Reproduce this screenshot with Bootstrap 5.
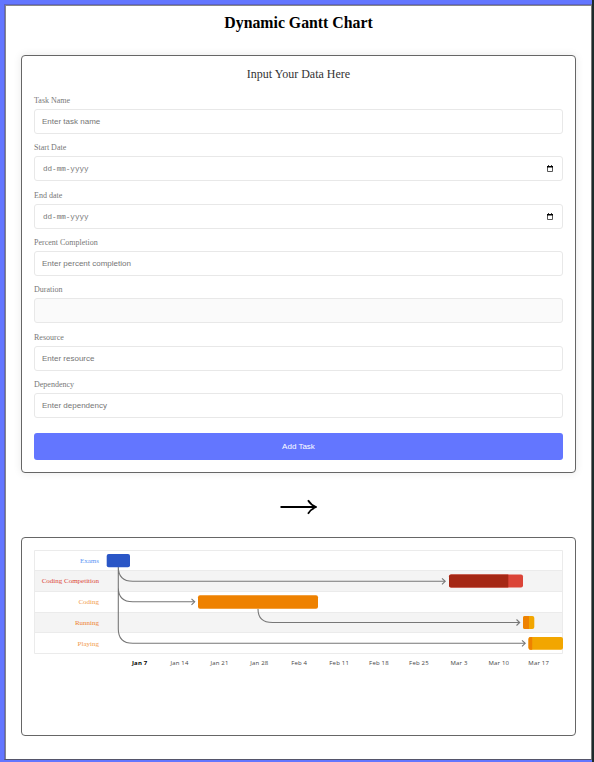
<!DOCTYPE html>
<html lang="en">
<head>
<meta charset="utf-8">
<meta name="viewport" content="width=device-width, initial-scale=1">
<title>Dynamic Gantt Chart</title>
<link href="https://cdn.jsdelivr.net/npm/bootstrap@5.3.0/dist/css/bootstrap.min.css" rel="stylesheet">
<style>
html,body{height:762px;overflow:hidden}
body{font-family:"Liberation Serif",serif;background:#6376ff;color:#000;padding:4px 0 2px 4px;border-right:2px solid #1d2b2b;line-height:1}
.page-frame{height:756px;border:1px solid #5c62c4;border-right-color:#777;border-bottom-color:#55556a;background:#fff;box-shadow:inset 1px 1px 0 #888;padding:0 15px 0 16px}
.page-title{font-size:15.8px;font-weight:700;line-height:18px;padding-top:9px;height:50px}
.panel{border:1px solid #666;border-radius:4px;background:#fff}
.form-panel{height:418px;padding:0 12px;box-shadow:0 0 8px rgba(0,0,0,.09)}
.form-title{font-size:12px;color:#333;line-height:14px;padding-top:11px;height:39.8px}
.field{height:47.38px}
.field label{display:block;font-size:8px;color:#777;line-height:10px;margin-bottom:3px}
.field .form-control{font-family:"Liberation Sans",sans-serif;font-size:8px;height:25px;min-height:0;padding:0 7px;border:1px solid #e8e8e8;border-radius:3px;line-height:12px;color:#757575}
.field .form-control::placeholder{color:#757575;opacity:1}
.field .form-control:disabled{background:#fafafa}
.field .date-text{font-family:"Liberation Mono",monospace;font-size:7.6px;padding:1px 6px 0 8px}
.btn-add{font-family:"Liberation Sans",sans-serif;font-size:8px;height:27px;padding:0;border:0;border-radius:3px;background:#6376ff!important;color:#fff!important;margin-top:5.6px}
.arrow-row{height:64px;padding-top:3px}
.chart-panel{height:199px;padding:12px 12px 0}
.chart-panel svg{display:block;overflow:visible}
.row-name{font-size:7px;text-anchor:end}
.tick{font:6px "Open Sans",sans-serif;letter-spacing:.2px;text-anchor:middle;fill:#444}
</style>
</head>
<body>
<main class="page-frame">
<h1 class="page-title text-center m-0">Dynamic Gantt Chart</h1>
<form class="panel form-panel">
<h2 class="form-title text-center fw-normal m-0">Input Your Data Here</h2>
<div class="field pt-0"><label for="task">Task Name</label><input id="task" class="form-control" placeholder="Enter task name"></div>
<div class="field"><label>Start Date</label><div class="form-control date-text d-flex align-items-center justify-content-between"><span>dd-mm-yyyy</span><svg class="me-0" width="10" height="8" viewBox="0 0 10 8"><path d="M1.500 1.500h5v5h-5z" fill="none" stroke="#444" stroke-width=".9"/><path d="M1 1h6v1.600H1zM2 .3h1V1H2zM5 .3h1V1H5z" fill="#000"/></svg></div></div>
<div class="field"><label>End date</label><div class="form-control date-text d-flex align-items-center justify-content-between"><span>dd-mm-yyyy</span><svg class="me-0" width="10" height="8" viewBox="0 0 10 8"><path d="M1.500 1.500h5v5h-5z" fill="none" stroke="#444" stroke-width=".9"/><path d="M1 1h6v1.600H1zM2 .3h1V1H2zM5 .3h1V1H5z" fill="#000"/></svg></div></div>
<div class="field"><label for="percent">Percent Completion</label><input id="percent" class="form-control" placeholder="Enter percent completion"></div>
<div class="field"><label for="duration">Duration</label><input id="duration" class="form-control" disabled></div>
<div class="field"><label for="resource">Resource</label><input id="resource" class="form-control" placeholder="Enter resource"></div>
<div class="field"><label for="dependency">Dependency</label><input id="dependency" class="form-control" placeholder="Enter dependency"></div>
<button type="button" class="btn btn-primary w-100 d-block btn-add">Add Task</button>
</form>
<div class="arrow-row d-flex align-items-center justify-content-center"><svg width="37" height="16" viewBox="0 0 37 16"><path d="M.5 8h34" stroke="#000" stroke-width="2"/><path d="M28 1.200Q31 6 36 8Q31 10 28 14.800" fill="none" stroke="#000" stroke-width="1.800"/></svg></div>
<section class="panel chart-panel">
<svg width="529" height="125" viewBox="34 550 529 125" role="img" aria-label="Task timeline">
<path fill="#f4f4f4" d="M34 570.5h529v21H34zM34 612h529v21H34z"/>
<path d="M34.5 550.5h528v103h-528zM34 570.5h529M34 591.5h529M34 612.5h529M34 632.5h529" fill="none" stroke="#ebebeb"/>
<g fill="none" stroke="#777" stroke-width="1.1">
<path d="M118.3 567q0 14.3 14.5 14.3H445M118.3 567v20.500q0 14.300 14.500 14.300H194M118.300 567v62q0 14.300 14.500 14.300H525M258 609q0 13.500 14.500 13.500H519.500"/>
<path d="M442 578.300l3.200 3-3.200 3M191.500 598.800l3.200 3-3.200 3M516.500 619.500l3.200 3-3.200 3M522 640.300l3.200 3-3.200 3"/>
</g>
<rect x="106.700" y="554" width="23.300" height="13.300" rx="2" fill="#2a56c6"/>
<rect x="449" y="574.500" width="74" height="13" rx="2" fill="#db4437"/><path d="M451 574.500h57.300v13H451q-2 0-2-2v-9q0-2 2-2" fill="#a52714"/>
<rect x="198" y="595.200" width="120" height="13.600" rx="2" fill="#ee8100"/>
<rect x="523" y="616" width="11.300" height="13" rx="2" fill="#f2a600"/><path d="M525 616h4v13h-4q-2 0-2-2v-9q0-2 2-2" fill="#ee8100"/>
<rect x="528.500" y="637" width="34.500" height="12.800" rx="2" fill="#f2a600"/><path d="M530.500 637h1.700v12.800h-1.700q-2 0-2-2V639q0-2 2-2" fill="#ee8100"/>
<g class="row-name"><text x="99" y="563" fill="#5e97f6">Exams</text><text x="99" y="583.300" fill="#db4437">Coding Competition</text><text x="99" y="604.300" fill="#f29a4a">Coding</text><text x="99" y="625.200" fill="#ee8130">Running</text><text x="99" y="646.200" fill="#f29a4a">Playing</text></g>
<g class="tick"><text x="139.700" y="665.200" style="font-weight:700;fill:#000">Jan 7</text><text x="179.500" y="665.200">Jan 14</text><text x="219.500" y="665.200">Jan 21</text><text x="259.300" y="665.200">Jan 28</text><text x="299.200" y="665.200">Feb 4</text><text x="339.200" y="665.200">Feb 11</text><text x="379" y="665.200">Feb 18</text><text x="419" y="665.200">Feb 25</text><text x="459" y="665.200">Mar 3</text><text x="498.800" y="665.200">Mar 10</text><text x="538.700" y="665.200">Mar 17</text></g>
</svg>
</section>
</main>
<script src="https://cdn.jsdelivr.net/npm/bootstrap@5.3.0/dist/js/bootstrap.bundle.min.js"></script>
</body>
</html>
